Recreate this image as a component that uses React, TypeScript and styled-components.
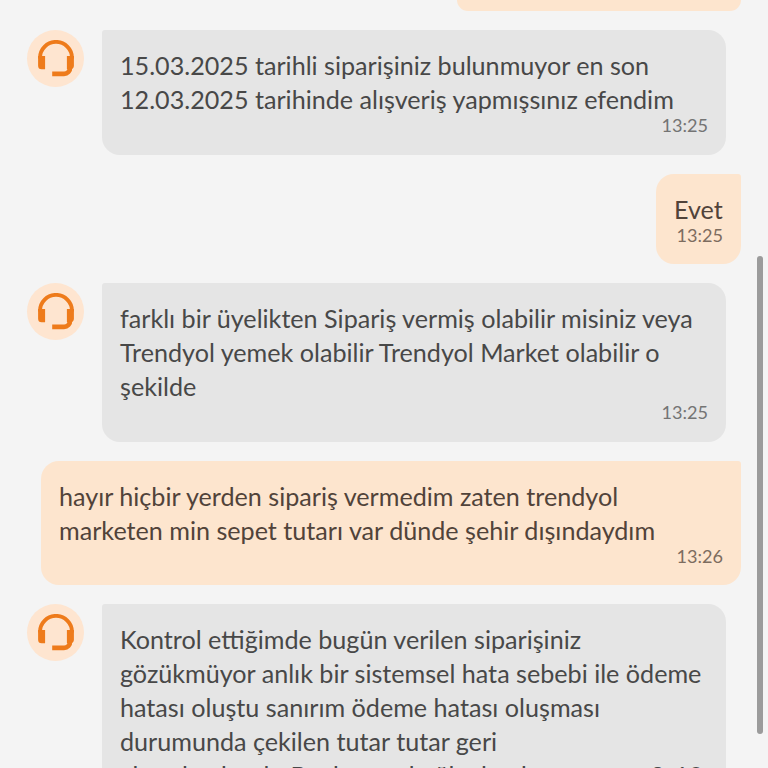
import React from "react";
import styled, { createGlobalStyle } from "styled-components";

const GlobalStyle = createGlobalStyle`
  body {
    margin: 0;
    background: #f4f4f4;
    overflow: hidden;
  }
`

const Wrapper = styled('div')`
  position: relative;
  box-sizing: border-box;
  height: 768px;
  overflow: hidden;
  background: #f4f4f4;
  font-family: Lato, "Liberation Sans", sans-serif;
`

const Messages = styled('div')`
  display: flex;
  flex-direction: column;
  gap: 19.05px;
  padding: 0 27px;
`

const Row = styled('div')<{ $mine?: boolean }>`
  display: flex;
  align-items: flex-start;
  justify-content: ${({ $mine }) => ($mine ? "flex-end" : "flex-start")};
  gap: 18px;
`

const PreviousBubble = styled('div')`
  width: 284px;
  height: 11px;
  border-radius: 0 0 18px 18px;
  background: #fde5ce;
`

const Avatar = styled('div')`
  display: flex;
  align-items: center;
  justify-content: center;
  flex: none;
  width: 57px;
  height: 57px;
  border-radius: 50%;
  background: #fee5d0;
`

const Bubble = styled('div')<{ $mine?: boolean }>`
  box-sizing: border-box;
  display: flex;
  flex-direction: column;
  max-width: ${({ $mine }) => ($mine ? "700px" : "624px")};
  padding: 18px 18px 20.4px;
  border-radius: ${({ $mine }) => ($mine ? "18px 3px 18px 18px" : "3px 18px 18px 18px")};
  background: ${({ $mine }) => ($mine ? "#fde5ce" : "#e5e5e5")};
  color: ${({ $mine }) => ($mine ? "#51433a" : "#484848")};
  flex: ${({ $mine }) => ($mine ? "none" : "0 0 624px")};
`

const Text = styled('div')<{ $width?: number }>`
  width: ${({ $width }) => ($width ? `${$width}px` : "auto")};
  min-width: 49px;
  font-size: 25.15px;
  line-height: 34.05px;
  white-space: nowrap;
`

const Time = styled('div')<{ $mine?: boolean }>`
  font-size: 18.1px;
  line-height: 18px;
  text-align: right;
  color: ${({ $mine }) => ($mine ? "#7d6c5f" : "#747474")};
`

const Scrollbar = styled('div')`
  position: absolute;
  top: 256px;
  right: 5px;
  width: 6px;
  height: 478px;
  border-radius: 3px;
  background: #9b9b9b;
`

const Headset = () => (
  <svg width="36" height="37" viewBox="0 0 36 37" fill="none">
    <path d="M2 18.5v-0.6a16 16 0 0 1 32 0v0.6" stroke="#ee7b1b" strokeWidth="3.9" />
    <path d="M0.1 16h7v13.3H3.6a3.5 3.5 0 0 1-3.5-3.5zM28.9 16h7v10a3.3 3.3 0 0 1-1.5 2.8l-0.6 0.5h-4.9z" fill="#ee7b1b" />
    <path d="M32 27.5a6 6 0 0 1-6 6.4H14.2" stroke="#ee7b1b" strokeWidth="4.7" />
  </svg>
)

type Message = {
  mine?: boolean
  width?: number
  time: string
  lines: string[]
}

const messages: Message[] = [
  {
    time: "13:25",
    lines: ["15.03.2025 tarihli siparişiniz bulunmuyor en son", "12.03.2025 tarihinde alışveriş yapmışsınız efendim"],
  },
  { mine: true, time: "13:25", lines: ["Evet"] },
  {
    time: "13:25",
    lines: [
      "farklı bir üyelikten Sipariş vermiş olabilir misiniz veya",
      "Trendyol yemek olabilir Trendyol Market olabilir o",
      "şekilde",
    ],
  },
  {
    mine: true,
    width: 664,
    time: "13:26",
    lines: ["hayır hiçbir yerden sipariş vermedim zaten trendyol", "marketen min sepet tutarı var dünde şehir dışındaydım"],
  },
  {
    time: "13:26",
    lines: [
      "Kontrol ettiğimde bugün verilen siparişiniz",
      "gözükmüyor anlık bir sistemsel hata sebebi ile ödeme",
      "hatası oluştu sanırım ödeme hatası oluşması",
      "durumunda çekilen tutar tutar geri",
      "aktarılmaktadır Bankanıza bağlı olarak ve en geç 2-10",
    ],
  },
]

const App: React.FunctionComponent = () => (
  <Wrapper>
    <GlobalStyle />
    <Messages>
      <Row $mine>
        <PreviousBubble />
      </Row>
      {messages.map(({ mine, width, time, lines }, i) => (
        <Row key={i} $mine={mine}>
          {!mine && <Avatar><Headset /></Avatar>}
          <Bubble $mine={mine}>
            <Text $width={width}>
              {lines.map(line => <div key={line}>{line}</div>)}
            </Text>
            <Time $mine={mine}>{time}</Time>
          </Bubble>
        </Row>
      ))}
    </Messages>
    <Scrollbar />
  </Wrapper>
);

export default App;
